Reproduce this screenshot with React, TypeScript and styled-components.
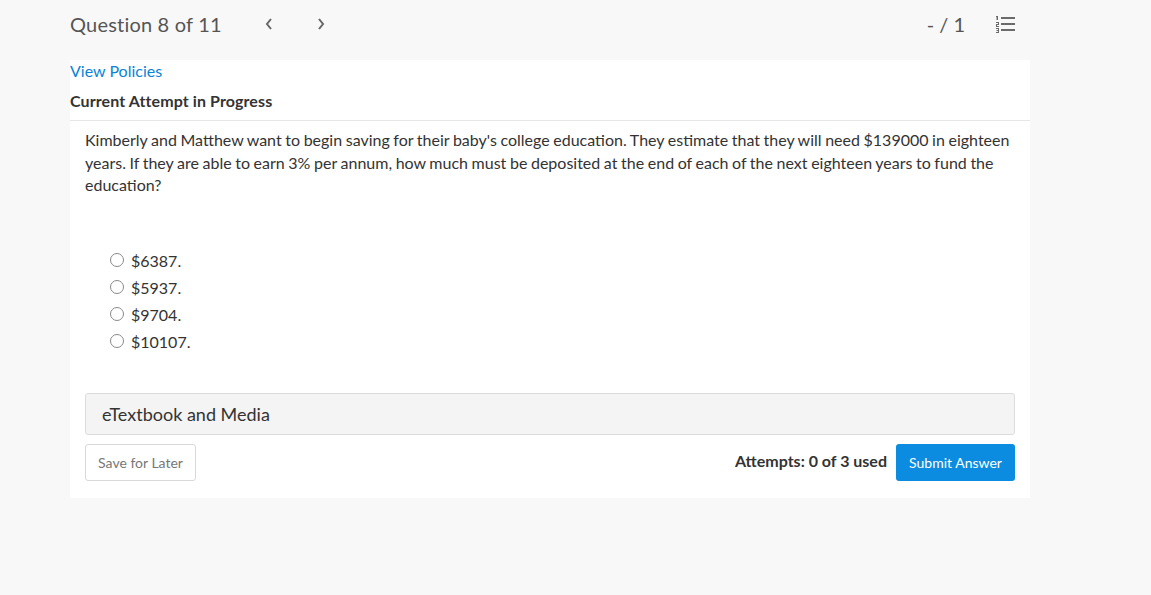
import React from "react";
import styled, { createGlobalStyle } from "styled-components";

const Global = createGlobalStyle`
  html, body { margin: 0; padding: 0; background: #f8f8f8; }
  body { font-family: Lato, "Open Sans", sans-serif; color: #333; }
  * { box-sizing: border-box; }
`;

const Page = styled.div`
  width: 1151px;
  min-height: 595px;
  background: #f8f8f8;
  padding-left: 70px;
`;

const Column = styled.div`
  width: 960px;
`;

const Header = styled.div`
  height: 60px;
  display: flex;
  align-items: center;
  padding-bottom: 13px;
`;

const Title = styled.h1`
  margin: 0;
  font-size: 20px;
  font-weight: 400;
  color: #555;
  letter-spacing: 0.2px;
`;

const NavButton = styled.button<{ $ml: number }>`
  border: none;
  background: none;
  padding: 0;
  width: 14px;
  height: 16px;
  display: flex;
  align-items: center;
  justify-content: center;
  margin-left: ${(p) => p.$ml}px;
  cursor: pointer;
`;

const Spacer = styled.div`
  flex: 1;
`;

const Score = styled.span`
  font-size: 20px;
  color: #555;
  margin-right: 30px;
`;

const ListButton = styled.button`
  border: none;
  background: none;
  padding: 0;
  margin-right: 15px;
  display: flex;
`;

const Panel = styled.div`
  background: #fff;
  padding-bottom: 17px;
`;

const PanelTop = styled.div`
  border-bottom: 1px solid #e6e6e6;
  padding-top: 1px;
  padding-bottom: 9px;
`;

const Link = styled.a`
  display: block;
  color: #0a84d6;
  font-size: 16px;
  line-height: 20px;
  text-decoration: none;
`;

const AttemptTitle = styled.h2`
  margin: 10px 0 0;
  font-size: 16px;
  font-weight: 700;
  color: #333;
  line-height: 20px;
  letter-spacing: 0.1px;
`;

const Body = styled.div`
  padding: 8px 15px 0;
`;

const Question = styled.p`
  margin: 0;
  font-size: 16px;
  line-height: 22.5px;
  color: #333;
  word-spacing: -0.5px;
`;

const Options = styled.div`
  margin-top: 50px;
  padding-left: 25px;
  display: flex;
  flex-direction: column;
`;

const Option = styled.label`
  display: flex;
  align-items: center;
  height: 27px;
  font-size: 16px;
  color: #333;
`;

const Radio = styled.span`
  width: 14px;
  height: 14px;
  border: 1px solid #8a8a8a;
  border-radius: 50%;
  margin-right: 7px;
  margin-top: -1px;
`;

const Media = styled.div`
  margin-top: 38px;
  height: 42px;
  background: #f4f4f4;
  border: 1px solid #dcdcdc;
  border-radius: 3px;
  display: flex;
  align-items: center;
  padding-left: 16px;
  font-size: 18px;
  color: #333;
`;

const Footer = styled.div`
  margin-top: 9px;
  display: flex;
  align-items: center;
`;

const SaveButton = styled.button`
  height: 37px;
  width: 111px;
  background: #fff;
  border: 1px solid #d9d9d9;
  border-radius: 3px;
  font-family: Lato, sans-serif;
  font-size: 14px;
  color: #777;
`;

const Attempts = styled.span`
  font-size: 16px;
  font-weight: 700;
  color: #333;
  margin-right: 9px;
  margin-top: -3px;
`;

const SubmitButton = styled.button`
  height: 37px;
  width: 119px;
  background: #0b8ce0;
  border: none;
  border-radius: 3px;
  font-family: Lato, sans-serif;
  font-size: 14px;
  color: #fff;
`;

const Chevron = ({ dir }: { dir: "left" | "right" }) => (
  <svg width="10" height="14" viewBox="0 0 10 14">
    <path
      d={dir === "left" ? "M7 2 L3 7 L7 12" : "M3 2 L7 7 L3 12"}
      fill="none"
      stroke="#666"
      strokeWidth="2"
    />
  </svg>
);

const ListIcon = () => (
  <svg width="20" height="18" viewBox="0 0 20 18" fill="#6b6b6b">
    <rect x="1.5" y="1" width="1.5" height="4" />
    <rect x="1" y="1" width="1" height="1" />
    <rect x="1" y="7" width="3" height="1" />
    <rect x="3" y="7" width="1" height="2" />
    <rect x="1" y="9" width="3" height="1" />
    <rect x="1" y="10" width="1" height="1" />
    <rect x="1" y="11" width="3" height="1" />
    <rect x="1" y="13" width="3" height="1" />
    <rect x="3" y="13" width="1" height="5" />
    <rect x="1.5" y="15" width="2" height="1" />
    <rect x="1" y="17" width="3" height="1" />
    <rect x="6" y="2" width="14" height="2" />
    <rect x="6" y="8" width="14" height="2" />
    <rect x="6" y="14" width="14" height="2" />
  </svg>
);

const options = ["$6387.", "$5937.", "$9704.", "$10107."];

export default function App() {
  return (
    <>
      <Global />
      <Page>
        <Column>
          <Header>
            <Title>Question 8 of 11</Title>
            <NavButton $ml={40} aria-label="Previous">
              <Chevron dir="left" />
            </NavButton>
            <NavButton $ml={38} aria-label="Next">
              <Chevron dir="right" />
            </NavButton>
            <Spacer />
            <Score>- / 1</Score>
            <ListButton aria-label="Question list">
              <ListIcon />
            </ListButton>
          </Header>
          <Panel>
            <PanelTop>
              <Link href="#">View Policies</Link>
              <AttemptTitle>Current Attempt in Progress</AttemptTitle>
            </PanelTop>
            <Body>
              <Question>
                Kimberly and Matthew want to begin saving for their baby's college education. They
                estimate that they will need $139000 in eighteen years. If they are able to earn 3%
                per annum, how much must be deposited at the end of each of the next eighteen years
                to fund the education?
              </Question>
              <Options>
                {options.map((o) => (
                  <Option key={o}>
                    <Radio />
                    {o}
                  </Option>
                ))}
              </Options>
              <Media>eTextbook and Media</Media>
              <Footer>
                <SaveButton>Save for Later</SaveButton>
                <Spacer />
                <Attempts>Attempts: 0 of 3 used</Attempts>
                <SubmitButton>Submit Answer</SubmitButton>
              </Footer>
            </Body>
          </Panel>
        </Column>
      </Page>
    </>
  );
}
